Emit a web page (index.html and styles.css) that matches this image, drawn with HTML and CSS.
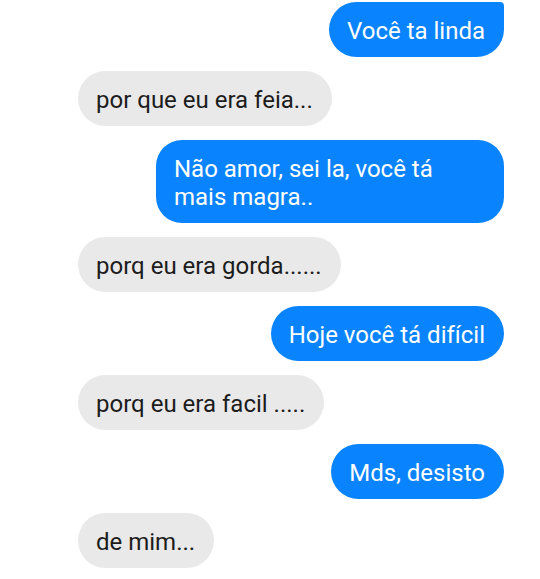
FILE: index.html
```html
<!DOCTYPE html>
<html lang="pt">
<head>
<meta charset="utf-8">
<link rel="stylesheet" href="styles.css">
</head>
<body>
<div class="chat">
  <div class="msg out first">Você ta linda</div>
  <div class="msg in">por que eu era feia...</div>
  <div class="msg out wide">Não amor, sei la, você tá mais magra..</div>
  <div class="msg in">porq eu era gorda......</div>
  <div class="msg out">Hoje você tá difícil</div>
  <div class="msg in">porq eu era facil .....</div>
  <div class="msg out">Mds, desisto</div>
  <div class="msg in">de mim...</div>
</div>
</body>
</html>
```
FILE: styles.css
```css
html, body {
  margin: 0;
  padding: 0;
  background: #ffffff;
}
.chat {
  display: flex;
  flex-direction: column;
  gap: 14px;
  padding: 2px 36px 0 78px;
  font-family: Roboto, "Noto Sans", sans-serif;
  font-size: 24px;
}
.msg {
  box-sizing: border-box;
  max-width: 348px;
  padding: 15px 19px 12px 18px;
  line-height: 28px;
  border-radius: 28px;
}
.out {
  align-self: flex-end;
  background: #0a84fe;
  color: #ffffff;
}
.in {
  align-self: flex-start;
  background: #e9e9e9;
  color: #1c1c1c;
}
.first {
  border-top-right-radius: 4px;
}
.wide {
  width: 348px;
  border-radius: 26px;
}
```
